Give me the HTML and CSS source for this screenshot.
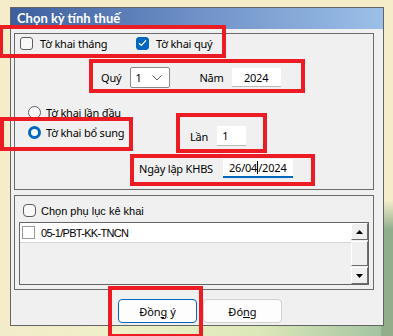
FILE: index.html
```html
<!DOCTYPE html>
<html lang="vi">
<head>
    <meta charset="UTF-8">
    <title>Chọn kỳ tính thuế</title>
    <link rel="stylesheet" href="styles.css">
</head>
<body>
    <div class="desktop">
        <div class="window">
            <div class="titlebar">Chọn kỳ tính thuế</div>
            <div class="window-body">
                <div class="group group-top">
                    <div class="row row-kind">
                        <label class="check check-month"><span class="box"></span>Tờ khai tháng</label>
                        <label class="check"><span class="box checked"><svg width="9" height="8" viewBox="0 0 9 8"><path d="M1 4.2 L3.4 6.4 L8 1.4" fill="none" stroke="#fff" stroke-width="1.3"/></svg></span>Tờ khai quý</label>
                    </div>
                    <div class="row row-period">
                        <span class="lbl">Quý</span>
                        <div class="combo"><span>1</span><svg width="10" height="6" viewBox="0 0 10 6"><path d="M0.5 0.5 L5 5 L9.5 0.5" fill="none" stroke="#606060" stroke-width="1"/></svg></div>
                        <span class="lbl lbl-nam">Năm</span>
                        <div class="field field-year">2024</div>
                    </div>
                    <div class="row row-first">
                        <label class="radio"><span class="dot"></span>Tờ khai lần đầu</label>
                    </div>
                    <div class="row row-extra">
                        <label class="radio"><span class="dot on"></span>Tờ khai bổ sung</label>
                        <span class="lbl lbl-lan">Lần</span>
                        <div class="field field-lan">1</div>
                    </div>
                    <div class="row row-date">
                        <span class="lbl">Ngày lập KHBS</span>
                        <div class="field field-date">26/04<span class="caret"></span>/2024</div>
                    </div>
                </div>

                <div class="group group-annex">
                    <label class="check check-annex"><span class="box"></span>Chọn phụ lục kê khai</label>
                    <div class="list">
                        <div class="list-items">
                            <div class="list-row"><span class="box square"></span>05-1/PBT-KK-TNCN</div>
                        </div>
                        <div class="scrollbar">
                            <div class="sb-btn"><svg width="7" height="4" viewBox="0 0 7 4"><path d="M3.5 0 L7 4 L0 4 Z" fill="#000"/></svg></div>
                            <div class="sb-thumb"></div>
                            <div class="sb-btn"><svg width="7" height="4" viewBox="0 0 7 4"><path d="M0 0 L7 0 L3.5 4 Z" fill="#000"/></svg></div>
                        </div>
                    </div>
                </div>

                <div class="buttons">
                    <button class="btn btn-default">Đồn<u>g</u> ý</button>
                    <button class="btn">Đó<u>n</u>g</button>
                </div>
            </div>
        </div>

        <!-- red annotation boxes -->
        <div class="mark mark-kind"></div>
        <div class="mark mark-period"></div>
        <div class="mark mark-extra"></div>
        <div class="mark mark-lan"></div>
        <div class="mark mark-date"></div>
        <div class="mark mark-ok"></div>
    </div>
</body>
</html>
```

FILE: styles.css
```css
body {
    margin: 0;
    background: #f5edca;
    font-family: 'Noto Sans', 'Segoe UI', sans-serif;
    font-size: 11px;
    letter-spacing: -0.2px;
    color: #000;
    overflow: hidden;
}
.desktop {
    position: relative;
    width: 393px;
    height: 336px;
    overflow: hidden;
    background:
        linear-gradient(to bottom, rgba(245, 237, 202, 0) 0, rgba(245, 237, 202, 0) 200px, #8fae8c 230px, #93ad8a 336px) right top / 12px 336px no-repeat,
        linear-gradient(to right, #f3ecca 0, #eef0c8 120px, #dce8b8 260px, #9fc0a0 393px) left bottom / 393px 14px no-repeat,
        #f5edca;
}
.window {
    position: absolute;
    left: 10px;
    top: 7px;
    width: 372px;
    height: 317px;
    border: 1px solid #646464;
    background: #f0f0f0;
    display: flex;
    flex-direction: column;
}
.titlebar {
    height: 21px;
    line-height: 21px;
    padding-left: 6px;
    color: #fff;
    font-family: Lato, 'Noto Sans', sans-serif;
    font-weight: bold;
    font-size: 13px;
    letter-spacing: 0;
    background: linear-gradient(to right, #3d5f9e 0, #6a8cc4 45%, #9bc0e8 100%);
}
.window-body {
    flex: 1;
    padding: 4px 0 0 3px;
}
.group {
    width: 358px;
    border: 1px solid #6b6b6b;
}
.group-top {
    height: 155px;
}
.row {
    display: flex;
    align-items: center;
}
.row-kind {
    height: 18px;
    padding-left: 5px;
}
.check {
    display: flex;
    align-items: center;
    gap: 7px;
}
.check-month {
    width: 116px;
}
.box {
    width: 11px;
    height: 11px;
    border: 1px solid #5e5e5e;
    border-radius: 3px;
    background: #f8f8f8;
    display: flex;
    align-items: center;
    justify-content: center;
    flex: none;
}
.box.checked {
    background: #0067c0;
    border-color: #0067c0;
}
.row-period {
    height: 21px;
    margin-top: 15px;
    padding-left: 86px;
}
.lbl {
    white-space: nowrap;
}
.combo {
    margin-left: 9px;
    border: 1px solid #8a8a8a;
    border-radius: 2px;
    background: #fff;
    display: flex;
    align-items: center;
    justify-content: space-between;
    padding: 0 7px 0 4px;
    box-sizing: border-box;
    width: 40px;
    height: 21px;
}
.lbl-nam {
    margin-left: 29px;
}
.field {
    background: #fff;
    border-bottom: 1px solid #b8b8b8;
    box-sizing: border-box;
    display: flex;
    align-items: center;
}
.field-year {
    margin-left: 8px;
    width: 49px;
    height: 19px;
    justify-content: center;
}
.row-first {
    height: 16px;
    margin-top: 16px;
    padding-left: 13px;
}
.radio {
    display: flex;
    align-items: center;
    gap: 5px;
}
.dot {
    width: 11px;
    height: 11px;
    border: 1px solid #5e5e5e;
    border-radius: 50%;
    background: #f8f8f8;
    box-sizing: content-box;
}
.dot.on {
    width: 7px;
    height: 7px;
    border: 3px solid #0067c0;
    background: #fff;
}
.row-extra {
    height: 26px;
    align-items: flex-start;
    padding-left: 13px;
}
.row-extra .radio {
    margin-top: 4px;
    height: 16px;
    width: 162px;
}
.lbl-lan {
    margin-top: 9px;
}
.field-lan {
    margin-left: 9px;
    margin-top: 6px;
    width: 29px;
    height: 20px;
    padding-left: 5px;
}
.row-date {
    height: 19px;
    margin-top: 13px;
    padding-left: 124px;
}
.field-date {
    margin-left: 10px;
    width: 70px;
    height: 19px;
    padding-left: 6px;
    border-bottom: 2px solid #0067c0;
}
.caret {
    display: inline-block;
    width: 1px;
    height: 13px;
    background: #000;
}
.group-annex {
    margin-top: 5px;
    height: 93px;
    font-family: 'Liberation Sans', Arial, sans-serif;
    letter-spacing: 0;
}
.check-annex {
    margin: 8px 0 0 8px;
    gap: 5px;
    height: 13px;
}
.check-annex .box {
    border-radius: 4px;
}
.list {
    margin: 5px 0 0 4px;
    width: 348px;
    height: 61px;
    border: 1px solid #646464;
    background: #f0f0f0;
    display: flex;
}
.list-items {
    flex: 1;
}
.list-row {
    height: 19px;
    background: #fff;
    border-bottom: 1px solid #d4d4d4;
    display: flex;
    align-items: center;
    gap: 6px;
    padding-left: 2px;
    font-size: 11px;
    letter-spacing: -0.7px;
}
.box.square {
    border-radius: 0;
    border-color: #9a9a9a;
    background: #fff;
}
.scrollbar {
    width: 17px;
    display: flex;
    flex-direction: column;
}
.sb-btn, .sb-thumb {
    box-sizing: border-box;
    border: 1px solid;
    border-color: #fff #6d6d6d #6d6d6d #fff;
    background: #f0f0f0;
    display: flex;
    align-items: center;
    justify-content: center;
}
.sb-btn {
    height: 17px;
}
.sb-thumb {
    flex: 1;
    margin: 1px 0;
}
.buttons {
    display: flex;
    gap: 6px;
    margin: 9px 0 0 104px;
}
.btn {
    width: 79px;
    height: 24px;
    border: 1px solid #d0d0d0;
    border-radius: 4px;
    background: #fdfdfd;
    font-family: 'Noto Sans', 'Segoe UI', sans-serif;
    font-size: 11px;
    padding: 0;
    color: #000;
}
.btn-default {
    border-color: #0067c0;
}
.mark {
    position: absolute;
    border: 4px solid #ed1c24;
    box-sizing: border-box;
}
.mark-kind { left: -1px; top: 25px; width: 227px; height: 33px; }
.mark-period { left: 89px; top: 59px; width: 216px; height: 34px; }
.mark-extra { left: 0; top: 117px; width: 133px; height: 34px; }
.mark-lan { left: 176px; top: 113px; width: 91px; height: 40px; }
.mark-date { left: 130px; top: 154px; width: 185px; height: 32px; }
.mark-ok { left: 108px; top: 286px; width: 95px; height: 52px; }
```
